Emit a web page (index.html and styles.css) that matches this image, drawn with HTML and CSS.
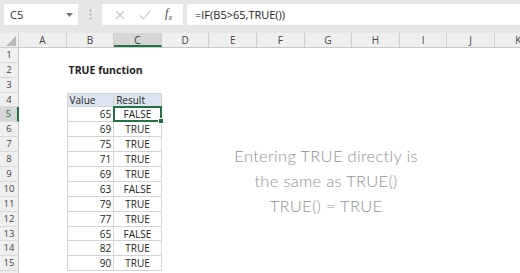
FILE: index.html
```html
<!DOCTYPE html>
<html lang="en">
<head>
  <meta charset="UTF-8">
  <title>TRUE function</title>
  <link rel="stylesheet" href="styles.css">
</head>
<body>
  <!-- Formula bar -->
  <div class="formula-bar">
    <div class="name-box">
      <span>C5</span>
      <svg class="arrow" width="7" height="4" viewBox="0 0 7 4"><path d="M0 0h7L3.5 4z" fill="#777"/></svg>
    </div>
    <div class="grip">
      <svg width="3" height="11" viewBox="0 0 3 11"><circle cx="1.5" cy="1.5" r="1" fill="#aaa"/><circle cx="1.5" cy="5.5" r="1" fill="#aaa"/><circle cx="1.5" cy="9.5" r="1" fill="#aaa"/></svg>
    </div>
    <div class="fx-box">
      <svg width="10" height="10" viewBox="0 0 10 10"><path d="M1 1l8 8M9 1l-8 8" stroke="#c4c4c4" stroke-width="1.1"/></svg>
      <svg width="12" height="10" viewBox="0 0 12 10"><path d="M1 5.5l3.5 3.5L11 1" stroke="#c4c4c4" stroke-width="1.1" fill="none"/></svg>
      <span class="fx">f<sub>x</sub></span>
    </div>
    <div class="formula-input">=IF(B5&gt;65,TRUE())</div>
  </div>

  <!-- Worksheet -->
  <div class="sheet">
    <div class="row head">
      <div class="corner"><svg width="10" height="10" viewBox="0 0 10 10"><path d="M10 0v10H0z" fill="#b9b9b9"/></svg></div>
      <div class="col">A</div>
      <div class="col">B</div>
      <div class="col sel">C</div>
      <div class="col">D</div>
      <div class="col">E</div>
      <div class="col">F</div>
      <div class="col">G</div>
      <div class="col">H</div>
      <div class="col">I</div>
      <div class="col">J</div>
      <div class="col">K</div>
    </div>
    <div class="row"><div class="rh">1</div></div>
    <div class="row"><div class="rh">2</div><div class="cell"></div><div class="cell title">TRUE function</div></div>
    <div class="row"><div class="rh">3</div></div>
    <div class="row"><div class="rh">4</div><div class="cell"></div><div class="cell t b th">Value</div><div class="cell t th">Result</div></div>
    <div class="row"><div class="rh sel">5</div><div class="cell"></div><div class="cell t b num">65</div><div class="cell t res active">FALSE</div></div>
    <div class="row"><div class="rh">6</div><div class="cell"></div><div class="cell t b num">69</div><div class="cell t res">TRUE</div></div>
    <div class="row"><div class="rh">7</div><div class="cell"></div><div class="cell t b num">75</div><div class="cell t res">TRUE</div></div>
    <div class="row"><div class="rh">8</div><div class="cell"></div><div class="cell t b num">71</div><div class="cell t res">TRUE</div></div>
    <div class="row"><div class="rh">9</div><div class="cell"></div><div class="cell t b num">69</div><div class="cell t res">TRUE</div></div>
    <div class="row"><div class="rh">10</div><div class="cell"></div><div class="cell t b num">63</div><div class="cell t res">FALSE</div></div>
    <div class="row"><div class="rh">11</div><div class="cell"></div><div class="cell t b num">79</div><div class="cell t res">TRUE</div></div>
    <div class="row"><div class="rh">12</div><div class="cell"></div><div class="cell t b num">77</div><div class="cell t res">TRUE</div></div>
    <div class="row"><div class="rh">13</div><div class="cell"></div><div class="cell t b num">65</div><div class="cell t res">FALSE</div></div>
    <div class="row"><div class="rh">14</div><div class="cell"></div><div class="cell t b num">82</div><div class="cell t res">TRUE</div></div>
    <div class="row"><div class="rh">15</div><div class="cell"></div><div class="cell t b num">90</div><div class="cell t res">TRUE</div></div>
    <div class="row"><div class="rh"></div></div>

    <!-- floating text box -->
    <div class="note">
      <p>Entering TRUE directly is</p>
      <p>the same as TRUE()</p>
      <p>TRUE() = TRUE</p>
    </div>
  </div>
</body>
</html>
```

FILE: styles.css
```css
body {
  margin: 0;
  width: 520px;
  height: 273px;
  overflow: hidden;
  background: #fff;
  font-family: "Open Sans", "Liberation Sans", sans-serif;
  color: #222;
}

/* formula bar */
.formula-bar {
  display: flex;
  align-items: flex-start;
  height: 33px;
  box-sizing: border-box;
  padding: 4px 0 0 4px;
  background: #e6e6e6;
}
.name-box {
  display: flex;
  align-items: center;
  justify-content: space-between;
  width: 74px;
  height: 21px;
  box-sizing: border-box;
  padding: 0 5px 0 6px;
  background: #fff;
  font-size: 11px;
  color: #333;
}
.grip {
  width: 24px;
  height: 21px;
  display: flex;
  align-items: center;
  justify-content: center;
}
.fx-box {
  display: flex;
  align-items: center;
  justify-content: space-around;
  width: 81px;
  height: 21px;
  box-sizing: border-box;
  padding: 0 4px 0 6px;
  background: #fff;
}
.fx {
  font-family: "Liberation Serif", serif;
  font-style: italic;
  font-size: 12px;
  color: #444;
}
.fx sub {
  font-size: 8px;
}
.formula-input {
  flex: 1;
  height: 21px;
  margin-left: 4px;
  padding-left: 8px;
  background: #fff;
  font-size: 11px;
  line-height: 21px;
  color: #222;
}

/* sheet grid */
.sheet {
  position: relative;
}
.row {
  display: flex;
  height: 14.9px;
}
.rh {
  width: 19px;
  flex: none;
  box-sizing: border-box;
  background: #efefef;
  border-right: 1px solid #c9c9c9;
  border-bottom: 1px solid #dadada;
  font-size: 9.5px;
  line-height: 14px;
  text-align: center;
  color: #444;
}
.rh.sel {
  background: #d6d6d6;
  border-right: 2px solid #217346;
  color: #217346;
}
.head {
  background: #efefef;
  border-bottom: 1px solid #c9c9c9;
  box-sizing: border-box;
}
.corner {
  width: 19px;
  flex: none;
  box-sizing: border-box;
  border-right: 1px solid #c9c9c9;
  display: flex;
  align-items: flex-end;
  justify-content: flex-end;
  padding: 0 2px 1px 0;
}
.col {
  width: 47.6px;
  flex: none;
  box-sizing: border-box;
  border-right: 1px solid #d0d0d0;
  font-size: 10px;
  line-height: 14px;
  text-align: center;
  color: #444;
}
.col.sel {
  background: #d6d6d6;
  border-bottom: 2px solid #217346;
  color: #333;
}
.cell {
  width: 47.6px;
  flex: none;
  box-sizing: border-box;
  font-size: 10px;
  line-height: 14px;
  padding: 0 2px;
  white-space: nowrap;
}
.title {
  font-weight: bold;
  font-size: 10.5px;
  line-height: 15px;
}
.t {
  border-right: 1px solid #d4d4d4;
  border-bottom: 1px solid #d4d4d4;
}
.t.b {
  border-left: 1px solid #d4d4d4;
}
.th {
  background: #dce6f1;
  border-top: 1px solid #d4d4d4;
  line-height: 13px;
}
.num {
  text-align: right;
}
.res {
  text-align: center;
}
.active {
  position: relative;
}
.active::after {
  content: "";
  position: absolute;
  top: -1px;
  left: -1px;
  right: -1px;
  bottom: -1px;
  border: 2px solid #217346;
}
.active::before {
  content: "";
  position: absolute;
  right: -3px;
  bottom: -3px;
  width: 4px;
  height: 4px;
  background: #217346;
  border: 1px solid #fff;
  z-index: 1;
}

/* floating text */
.note {
  position: absolute;
  left: 216px;
  top: 111px;
  width: 220px;
  text-align: center;
  font-family: "Lato", "DejaVu Sans", sans-serif;
  font-weight: 300;
  font-size: 16.5px;
  line-height: 25px;
  letter-spacing: 0.3px;
  color: #929292;
}
.note p {
  margin: 0;
}
```
